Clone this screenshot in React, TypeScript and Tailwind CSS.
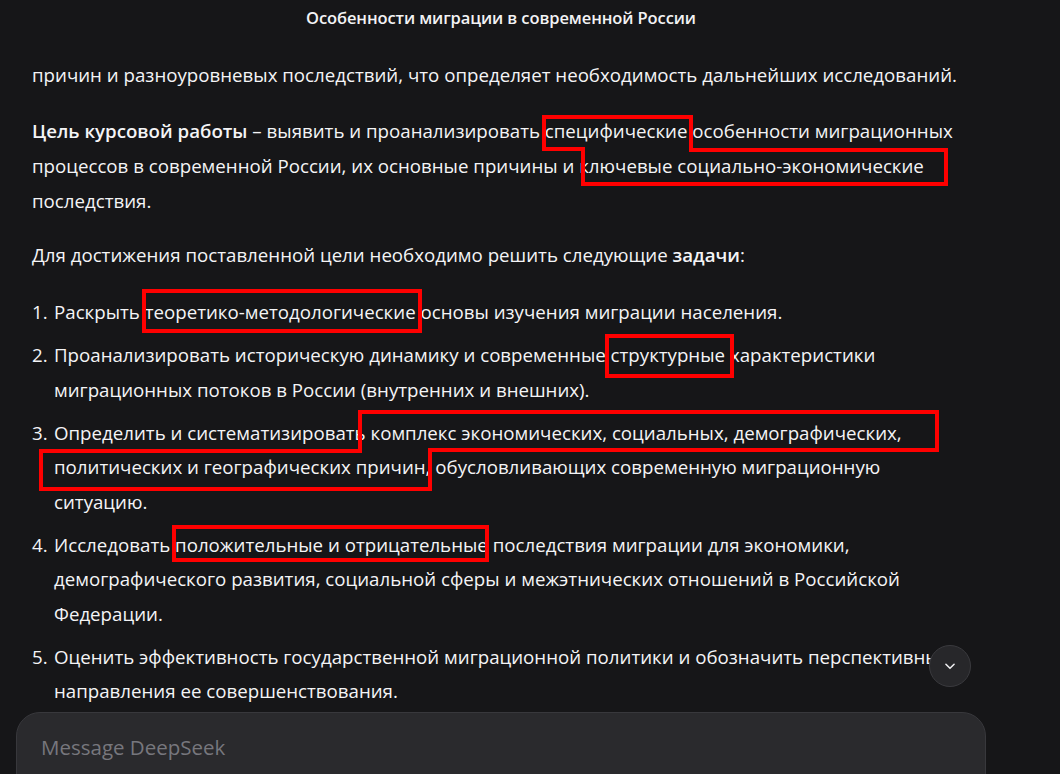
import React from 'react';

const Title: React.FC = () => (
  <div className="h-[36px] flex items-center justify-center w-[1002px]">
    <h1 className="text-[16.5px] font-semibold text-[#f3f3f5] tracking-[-0.1px]">
      Особенности миграции в современной России
    </h1>
  </div>
);

const items: React.ReactNode[] = [
  <>Раскрыть теоретико-методологические основы изучения миграции населения.</>,
  <>
    Проанализировать историческую динамику и современные структурные характеристики
    <br />
    миграционных потоков в России (внутренних и внешних).
  </>,
  <>
    Определить и систематизировать комплекс экономических, социальных, демографических,
    <br />
    политических и географических причин, обусловливающих современную миграционную
    <br />
    ситуацию.
  </>,
  <>
    Исследовать положительные и отрицательные последствия миграции для экономики,
    <br />
    демографического развития, социальной сферы и межэтнических отношений в Российской
    <br />
    Федерации.
  </>,
  <>
    Оценить эффективность государственной миграционной политики и обозначить перспективные
    <br />
    направления ее совершенствования.
  </>,
];

// red marker outlines drawn over the text
const Annotations: React.FC = () => (
  <svg
    className="absolute inset-0 pointer-events-none"
    width={1060}
    height={774}
    viewBox="0 0 1060 774"
    fill="none"
    stroke="#ff0000"
    strokeWidth={4}
  >
    <polygon points="544,117 691,117 691,150 946,150 946,184 583,184 583,149 544,149" />
    <rect x={144} y={291} width={276} height={40} />
    <rect x={607} y={336} width={125} height={40} />
    <polygon points="360,412 937,412 937,450 430,450 430,489 41,489 41,451 360,451" />
    <rect x={174} y={527} width={313} height={33} />
  </svg>
);

export default function App() {
  return (
    <div
      className="relative w-[1060px] h-[774px] overflow-hidden bg-[#161618] text-[#f4f4f6]"
      style={{ fontFamily: '"Open Sans", "Noto Sans", sans-serif' }}
    >
      <Title />
      <div className="pl-[32px] pt-[21px] text-[18.7px] whitespace-nowrap">
        <p className="leading-[35px] mb-[21px]">
          причин и разноуровневых последствий, что определяет необходимость дальнейших исследований.
        </p>
        <p className="leading-[35px] mb-[19px]">
          <strong className="font-semibold">Цель курсовой работы</strong> – выявить и проанализировать специфические
          особенности миграционных
          <br />
          процессов в современной России, их основные причины и ключевые социально-экономические
          <br />
          последствия.
        </p>
        <p className="leading-[35px] mb-[23px]">
          Для достижения поставленной цели необходимо решить следующие <strong className="font-semibold">задачи</strong>:
        </p>
        <ol className="flex flex-col gap-[8.5px]">
          {items.map((it, i) => (
            <li key={i} className="flex leading-[34.5px]">
              <span className="w-[22px] shrink-0">{i + 1}.</span>
              <span>{it}</span>
            </li>
          ))}
        </ol>
      </div>

      <button className="absolute left-[929px] top-[645px] w-[42px] h-[42px] rounded-full bg-[#27272a] border border-[#3a3a3e] flex items-center justify-center">
        <svg width="14" height="14" viewBox="0 0 24 24" fill="none" stroke="#f0f0f2" strokeWidth={2.6} strokeLinecap="round" strokeLinejoin="round">
          <path d="M5 9l7 7 7-7" />
        </svg>
      </button>

      <div className="absolute left-[16px] top-[712px] w-[970px] h-[100px] rounded-t-[24px] bg-[#2a2a2d] border border-[#38383c] px-[24px] pt-[19px]">
        <div className="text-[20.5px] text-[#77777d]">Message DeepSeek</div>
      </div>

      <Annotations />
    </div>
  );
}
